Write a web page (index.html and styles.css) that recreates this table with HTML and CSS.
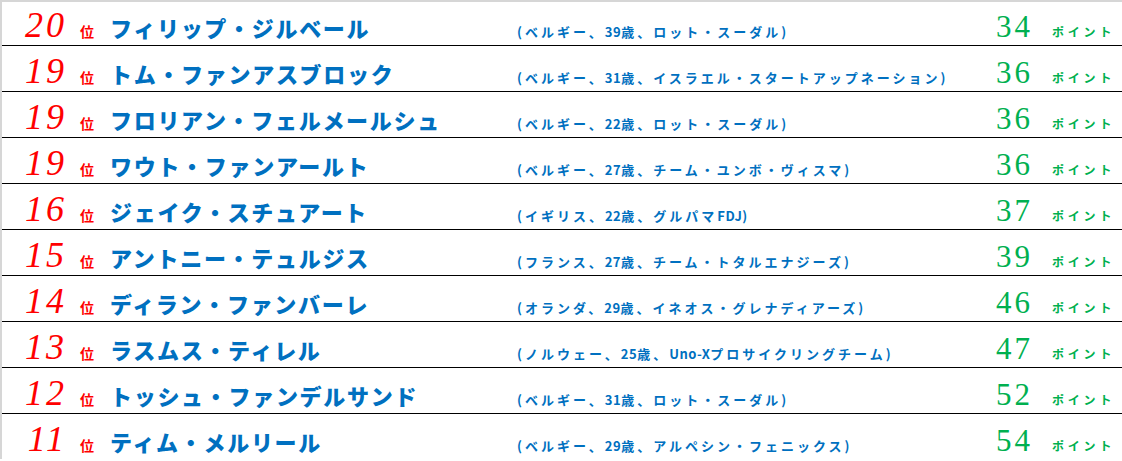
FILE: index.html
```html
<!DOCTYPE html>
<html lang="ja">
<head>
<meta charset="utf-8">
<link rel="stylesheet" href="styles.css">
</head>
<body>
<div class="table">
  <div class="row first"><span class="rank">20</span><span class="pos">位</span><span class="name">フィリップ・ジルベール</span><span class="desc">(ベルギー、<span class="num">39</span>歳、ロット・スーダル)</span><span class="pts">34</span><span class="unit">ポイント</span></div>
  <div class="row"><span class="rank">19</span><span class="pos">位</span><span class="name">トム・ファンアスブロック</span><span class="desc">(ベルギー、<span class="num">31</span>歳、イスラエル・スタートアップネーション)</span><span class="pts">36</span><span class="unit">ポイント</span></div>
  <div class="row"><span class="rank">19</span><span class="pos">位</span><span class="name">フロリアン・フェルメールシュ</span><span class="desc">(ベルギー、<span class="num">22</span>歳、ロット・スーダル)</span><span class="pts">36</span><span class="unit">ポイント</span></div>
  <div class="row"><span class="rank">19</span><span class="pos">位</span><span class="name">ワウト・ファンアールト</span><span class="desc">(ベルギー、<span class="num">27</span>歳、チーム・ユンボ・ヴィスマ)</span><span class="pts">36</span><span class="unit">ポイント</span></div>
  <div class="row"><span class="rank">16</span><span class="pos">位</span><span class="name">ジェイク・スチュアート</span><span class="desc">(イギリス、<span class="num">22</span>歳、グルパマ<span class="num">FDJ</span>)</span><span class="pts">37</span><span class="unit">ポイント</span></div>
  <div class="row"><span class="rank">15</span><span class="pos">位</span><span class="name">アントニー・テュルジス</span><span class="desc">(フランス、<span class="num">27</span>歳、チーム・トタルエナジーズ)</span><span class="pts">39</span><span class="unit">ポイント</span></div>
  <div class="row"><span class="rank">14</span><span class="pos">位</span><span class="name">ディラン・ファンバーレ</span><span class="desc">(オランダ、<span class="num">29</span>歳、イネオス・グレナディアーズ)</span><span class="pts">46</span><span class="unit">ポイント</span></div>
  <div class="row"><span class="rank">13</span><span class="pos">位</span><span class="name">ラスムス・ティレル</span><span class="desc">(ノルウェー、<span class="num">25</span>歳、<span class="num">Uno-X</span>プロサイクリングチーム)</span><span class="pts">47</span><span class="unit">ポイント</span></div>
  <div class="row"><span class="rank">12</span><span class="pos">位</span><span class="name">トッシュ・ファンデルサンド</span><span class="desc">(ベルギー、<span class="num">31</span>歳、ロット・スーダル)</span><span class="pts">52</span><span class="unit">ポイント</span></div>
  <div class="row"><span class="rank">11</span><span class="pos">位</span><span class="name">ティム・メルリール</span><span class="desc">(ベルギー、<span class="num">29</span>歳、アルペシン・フェニックス)</span><span class="pts">54</span><span class="unit">ポイント</span></div>
</div>
</body>
</html>
```
FILE: styles.css
```css
html, body {
  margin: 0;
  padding: 0;
  background: #ffffff;
}
.table {
  border-top: 2px solid #d6d6d6;
  border-left: 2px solid #d6d6d6;
  height: 459px;
  box-sizing: border-box;
}
.row {
  display: grid;
  grid-template-columns: 65px 43px 407px 466px 50px 89px;
  align-items: baseline;
  align-content: end;
  padding-bottom: 2px;
  box-sizing: border-box;
  border-bottom: 1px solid #000000;
  height: 46px;
  white-space: nowrap;
  line-height: 1;
}
.row.first {
  height: 44px;
}
.rank {
  font-family: "Liberation Serif", serif;
  font-style: italic;
  font-size: 36px;
  letter-spacing: 3px;
  color: #ff0000;
  text-align: right;
}
.pos {
  font-family: "Noto Sans CJK JP", sans-serif;
  font-weight: 700;
  font-size: 14px;
  color: #ff0000;
  padding-left: 13px;
}
.name {
  font-family: "Noto Sans CJK JP", sans-serif;
  font-weight: 900;
  font-size: 22px;
  letter-spacing: 1.7px;
  color: #0070c0;
}
.desc {
  font-family: "Noto Sans CJK JP", sans-serif;
  font-weight: 700;
  font-size: 13px;
  letter-spacing: 3px;
  color: #0070c0;
}
.num {
  letter-spacing: 0.5px;
}
.pts {
  font-family: "Liberation Serif", serif;
  font-size: 31px;
  letter-spacing: 3px;
  color: #00b050;
  text-align: right;
}
.unit {
  font-family: "Noto Sans CJK JP", sans-serif;
  font-weight: 700;
  font-size: 12px;
  letter-spacing: 3.8px;
  color: #00b050;
  padding-left: 19px;
}
```
